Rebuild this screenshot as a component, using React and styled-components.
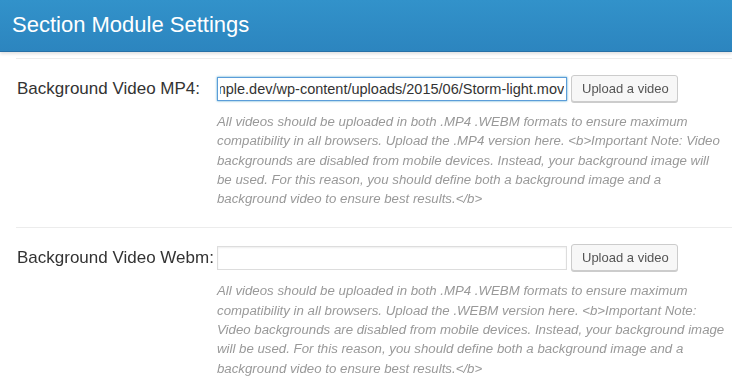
import React, { useEffect, useRef } from "react";
import styled, { createGlobalStyle } from "styled-components";

const GlobalStyle = createGlobalStyle`
  html, body {
    margin: 0;
    padding: 0;
    background: #fff;
    font-family: "Liberation Sans", Arial, sans-serif;
  }
`;

const Header = styled.header`
  height: 51px;
  display: flex;
  align-items: center;
  padding-left: 12px;
  background: linear-gradient(#3292ca, #2c85bf);
  border-bottom: 1px solid #2670a6;
  box-shadow: 0 2px 3px rgba(0, 0, 0, 0.12);
`;

const Title = styled.h1`
  margin: 0 0 2px;
  font-size: 22px;
  font-weight: normal;
  color: #fff;
`;

const Body = styled.div`
  padding: 6px 0 0 16px;
`;

const Row = styled.div`
  display: grid;
  grid-template-columns: 201px 1fr;
  border-top: 1px solid #ececec;
  padding: 16px 0 19px;
`;

const Label = styled.label`
  padding-left: 1px;
  height: 27px;
  line-height: 27px;
  font-size: 17px;
  color: #333;
  white-space: nowrap;
`;

const Field = styled.div`
  display: flex;
  align-items: center;
  gap: 4px;
`;

const TextInput = styled.input`
  box-sizing: border-box;
  width: 350px;
  height: 24px;
  margin: 0;
  padding: 0 2px;
  font-family: inherit;
  font-size: 14.5px;
  color: #333;
  background: #fff;
  border: 1px solid ${(p) => (p.$active ? "#5b9dd9" : "#ddd")};
  box-shadow: ${(p) =>
    p.$active
      ? "0 0 2px rgba(30, 140, 190, 0.8)"
      : "inset 0 1px 2px rgba(0, 0, 0, 0.07)"};
  outline: none;
`;

const Button = styled.button`
  box-sizing: border-box;
  width: 107px;
  height: 27px;
  padding: 0 10px;
  font-family: inherit;
  font-size: 13px;
  color: #555;
  background: #f7f7f7;
  border: 1px solid #cccccc;
  border-radius: 3px;
  box-shadow: 0 1px 0 #ccc;
  white-space: nowrap;
  cursor: pointer;
`;

const Help = styled.p`
  grid-column: 2;
  margin: 10px 0 0;
  font-size: 13.25px;
  line-height: 19.3px;
  font-style: italic;
  color: #999;
  white-space: nowrap;
`;

const rows = [
  {
    label: "Background Video MP4:",
    value: "http://example.dev/wp-content/uploads/2015/06/Storm-light.mov",
    active: true,
    help: [
      "All videos should be uploaded in both .MP4 .WEBM formats to ensure maximum",
      "compatibility in all browsers. Upload the .MP4 version here. <b>Important Note: Video",
      "backgrounds are disabled from mobile devices. Instead, your background image will",
      "be used. For this reason, you should define both a background image and a",
      "background video to ensure best results.</b>",
    ],
  },
  {
    label: "Background Video Webm:",
    value: "",
    active: false,
    help: [
      "All videos should be uploaded in both .MP4 .WEBM formats to ensure maximum",
      "compatibility in all browsers. Upload the .WEBM version here. <b>Important Note:",
      "Video backgrounds are disabled from mobile devices. Instead, your background image",
      "will be used. For this reason, you should define both a background image and a",
      "background video to ensure best results.</b>",
    ],
  },
];

function VideoRow({ row }) {
  const inputRef = useRef(null);
  useEffect(() => {
    const el = inputRef.current;
    if (row.active && el) {
      el.focus();
      el.setSelectionRange(el.value.length, el.value.length);
      el.scrollLeft = el.scrollWidth;
    }
  }, [row.active]);

  return (
    <Row>
      <Label>{row.label}</Label>
      <Field>
        <TextInput
          ref={inputRef}
          type="text"
          defaultValue={row.value}
          $active={row.active}
        />
        <Button type="button">Upload a video</Button>
      </Field>
      <Help>
        {row.help.map((line, i) => (
          <React.Fragment key={i}>
            {i > 0 && <br />}
            {line}
          </React.Fragment>
        ))}
      </Help>
    </Row>
  );
}

export default function App() {
  return (
    <>
      <GlobalStyle />
      <Header>
        <Title>Section Module Settings</Title>
      </Header>
      <Body>
        {rows.map((row) => (
          <VideoRow key={row.label} row={row} />
        ))}
      </Body>
    </>
  );
}
